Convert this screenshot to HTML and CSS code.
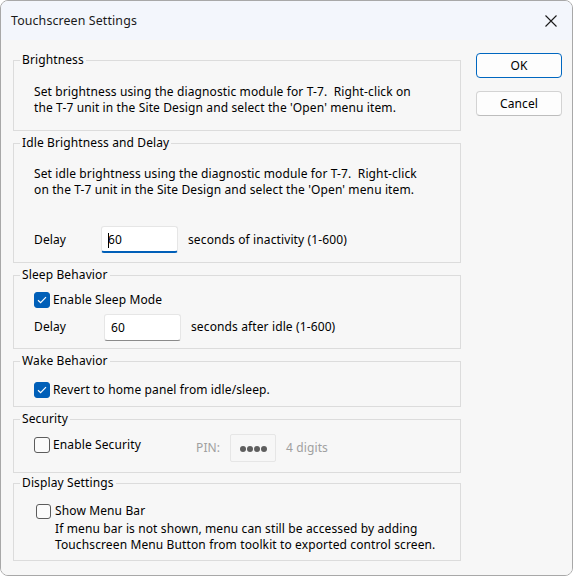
FILE: index.html
```html
<!DOCTYPE html>
<html>
<head>
<meta charset="utf-8">
<link rel="stylesheet" href="styles.css">
</head>
<body>
<div class="window">
  <div class="titlebar">
    <span class="title">Touchscreen Settings</span>
    <span class="close" aria-label="Close">
      <svg width="12" height="12" viewBox="0 0 12 12"><path d="M0.5 0.5 L11.5 11.5 M11.5 0.5 L0.5 11.5" stroke="#1a1a1a" stroke-width="1.1" fill="none"/></svg>
    </span>
  </div>
  <div class="client">
    <div class="groups">
      <fieldset class="group g-bright">
        <legend>Brightness</legend>
        <div class="inner">
          <p class="note">Set brightness using the diagnostic module for T-7.&nbsp; Right-click on<br>the T-7 unit in the Site Design and select the 'Open' menu item.</p>
        </div>
      </fieldset>
      <fieldset class="group g-idle">
        <legend>Idle Brightness and Delay</legend>
        <div class="inner">
          <p class="note">Set idle brightness using the diagnostic module for T-7.&nbsp; Right-click<br>on the T-7 unit in the Site Design and select the 'Open' menu item.</p>
          <div class="row row-idle">
            <span class="lbl">Delay</span>
            <span class="edit focused"><span class="caret"></span>60</span>
            <span class="suffix">seconds of inactivity (1-600)</span>
          </div>
        </div>
      </fieldset>
      <fieldset class="group g-sleep">
        <legend>Sleep Behavior</legend>
        <div class="inner">
          <div class="check"><span class="box on"><svg width="10" height="8" viewBox="0 0 10 8"><path d="M1 4.2 L3.6 6.6 L9 1.2" stroke="#fff" stroke-width="1.2" fill="none"/></svg></span>Enable Sleep Mode</div>
          <div class="row row-sleep">
            <span class="lbl">Delay</span>
            <span class="edit">60</span>
            <span class="suffix">seconds after idle (1-600)</span>
          </div>
        </div>
      </fieldset>
      <fieldset class="group g-wake">
        <legend>Wake Behavior</legend>
        <div class="inner">
          <div class="check"><span class="box on"><svg width="10" height="8" viewBox="0 0 10 8"><path d="M1 4.2 L3.6 6.6 L9 1.2" stroke="#fff" stroke-width="1.2" fill="none"/></svg></span>Revert to home panel from idle/sleep.</div>
        </div>
      </fieldset>
      <fieldset class="group g-sec">
        <legend>Security</legend>
        <div class="inner sec-row">
          <div class="check"><span class="box"></span>Enable Security</div>
          <span class="pin-lbl">PIN:</span>
          <span class="pin"><i></i><i></i><i></i><i></i></span>
          <span class="pin-hint">4 digits</span>
        </div>
      </fieldset>
      <fieldset class="group g-disp">
        <legend>Display Settings</legend>
        <div class="inner">
          <div class="check check-disp"><span class="box"></span>Show Menu Bar</div>
          <p class="desc">If menu bar is not shown, menu can still be accessed by adding<br>Touchscreen Menu Button from toolkit to exported control screen.</p>
        </div>
      </fieldset>
    </div>
    <div class="buttons">
      <button class="btn default">OK</button>
      <button class="btn">Cancel</button>
    </div>
  </div>
</div>
</body>
</html>
```
FILE: styles.css
```css
html, body {
  margin: 0;
  padding: 0;
  background: #ffffff;
}
body {
  font-family: "Noto Sans", "Open Sans", sans-serif;
  font-size: 12px;
  letter-spacing: 0.12px;
  color: #000;
}
.window {
  width: 573px;
  height: 576px;
  box-sizing: border-box;
  border: 1px solid #a8a8a8;
  border-radius: 8px;
  overflow: hidden;
  display: flex;
  flex-direction: column;
  background: #f7f7f7;
}
.titlebar {
  height: 39px;
  flex: none;
  display: flex;
  align-items: center;
  justify-content: space-between;
  background: #f3f6fc;
  padding: 0 15px 0 10px;
}
.title {
  font-size: 12.4px;
  color: #1a1a1a;
}
.close {
  display: flex;
  align-items: center;
}
.client {
  flex: 1;
  display: flex;
  padding: 12px 0 0 12px;
  background: #f7f7f7;
}
.groups {
  width: 448px;
  display: flex;
  flex-direction: column;
}
.group {
  margin: 0;
  padding: 0;
  border: 1px solid #dcdcdc;
  min-width: 0;
}
.group + .group {
  margin-top: 4px;
}
.group.g-disp {
  margin-top: 2px;
}
legend {
  margin-left: 6px;
  padding: 0 2px;
  line-height: 16px;
  height: 16px;
}
.inner {
  padding-left: 20px;
}
.note, .desc {
  margin: 0;
  line-height: 16px;
}
.g-bright .inner { padding-top: 16px; padding-bottom: 14px; }
.g-idle .inner { padding-top: 15px; padding-bottom: 9px; }
.g-sleep .inner { padding-top: 8px; padding-bottom: 7px; }
.g-wake .inner { padding-top: 12px; padding-bottom: 7px; }
.g-sec .inner { padding-top: 7px; padding-bottom: 10px; }
.g-disp .inner { padding-top: 11px; padding-bottom: 7px; padding-left: 22px; }

.row {
  display: flex;
  align-items: center;
  height: 27px;
}
.row-idle { margin-top: 28px; }
.row-sleep { margin-top: 5px; }
.row-sleep .lbl, .row-sleep .suffix { margin-top: -3px; }
.lbl { width: 67px; }
.row-sleep .lbl { width: 70px; }
.edit {
  box-sizing: border-box;
  width: 77px;
  height: 27px;
  background: #fff;
  border: 1px solid #e6e6e6;
  border-bottom-color: #8a8a8a;
  border-radius: 3px;
  padding-left: 6px;
  display: flex;
  align-items: center;
  position: relative;
}
.edit.focused {
  border-bottom: 2px solid #005fb8;
  padding-top: 1px;
}
.caret {
  position: absolute;
  left: 6px;
  top: 6px;
  width: 1px;
  height: 15px;
  background: #000;
}
.suffix { margin-left: 10px; }
.check {
  display: flex;
  align-items: center;
  height: 18px;
  line-height: 18px;
}
.box {
  box-sizing: border-box;
  width: 16px;
  height: 16px;
  border-radius: 3px;
  border: 1px solid #5c5c5c;
  background: #fbfbfb;
  margin-right: 3px;
  display: flex;
  align-items: center;
  justify-content: center;
}
.box.on {
  background: #005fb8;
  border-color: #005fb8;
}
.check-disp .box { width: 15px; height: 15px; margin-right: 4px; }
.sec-row {
  display: flex;
  align-items: center;
  height: 28px;
}
.sec-row .check { width: 162px; margin-top: -6px; }
.pin-lbl { color: #a0a0a0; width: 34px; margin-top: -2px; }
.pin {
  box-sizing: border-box;
  width: 46px;
  height: 28px;
  border: 1px solid #e6e6e6;
  border-radius: 2px;
  display: flex;
  align-items: center;
  justify-content: center;
  gap: 1px;
  background: #f7f7f7;
  padding-top: 1px;
}
.pin i {
  width: 6px;
  height: 6px;
  border-radius: 50%;
  background: #5e5e5e;
}
.pin-hint { color: #a0a0a0; margin-left: 10px; margin-top: -2px; }
.desc { padding-left: 19px; padding-top: 1px; }

.buttons {
  display: flex;
  flex-direction: column;
  gap: 13px;
  margin-left: 15px;
  padding-top: 1px;
}
.btn {
  box-sizing: border-box;
  width: 86px;
  height: 25px;
  font-family: inherit;
  font-size: 12px;
  letter-spacing: 0.12px;
  color: #000;
  background: #fdfdfd;
  border: 1px solid #d3d3d3;
  border-bottom-color: #bdbdbd;
  border-radius: 4px;
  padding: 0;
}
.btn.default {
  border: 1px solid #0067c0;
}
```
